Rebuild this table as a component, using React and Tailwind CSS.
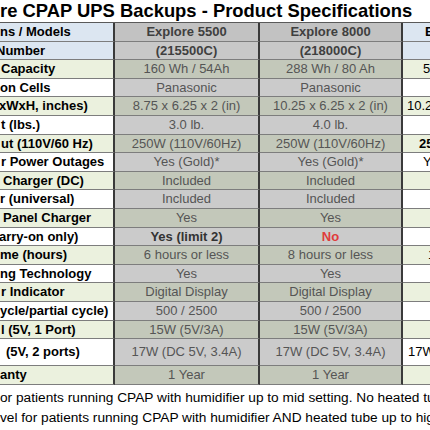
import React from 'react';

const GREEN_GRAY = 'bg-[#c3c8ba]';
const PLAIN_GRAY = 'bg-[#cbcbcb]';

// label: visible part of the spec name, lx: its left offset
// r: the third product column, which runs off the page (text + left offset)
const rows = [
  { label: 'ns / Models', lx: 0, a: 'Explore 5500', b: 'Explore 8000', r: 'Explore 6000', rx: 22, kind: 'head', bold: true },
  { label: 'Number', lx: -4, a: '(215500C)', b: '(218000C)', r: '', rx: 0, kind: 'blue', bold: true },
  { label: 'Capacity', lx: 1, a: '160 Wh / 54Ah', b: '288 Wh / 80 Ah', r: '512 Wh / 40Ah', rx: 20, kind: 'green' },
  { label: 'on Cells', lx: 0, a: 'Panasonic', b: 'Panasonic', r: '', rx: 0, kind: 'white' },
  { label: 'xWxH, inches)', lx: -1, a: '8.75 x 6.25 x 2 (in)', b: '10.25 x 6.25 x 2 (in)', r: '10.25 x 6.25 x 2 (in)', rx: 4, kind: 'green' },
  { label: 't (lbs.)', lx: 1, a: '3.0 lb.', b: '4.0 lb.', r: '', rx: 0, kind: 'white' },
  { label: 'ut (110V/60 Hz)', lx: 1, a: '250W (110V/60Hz)', b: '250W (110V/60Hz)', r: '250W (110V)', rx: 16, kind: 'green', rBold: true },
  { label: 'r Power Outages', lx: 1, a: 'Yes (Gold)*', b: 'Yes (Gold)*', r: 'Yes (Gold)*', rx: 20, kind: 'white' },
  { label: 'Charger (DC)', lx: 3, a: 'Included', b: 'Included', r: '', rx: 0, kind: 'green' },
  { label: 'r (universal)', lx: 0, a: 'Included', b: 'Included', r: '', rx: 0, kind: 'white' },
  { label: 'Panel Charger', lx: 3, a: 'Yes', b: 'Yes', r: '', rx: 0, kind: 'green' },
  { label: 'arry-on only)', lx: -1, a: 'Yes (limit 2)', b: 'No', r: '', rx: 0, kind: 'white', aBold: true, bRed: true },
  { label: 'me (hours)', lx: 0, a: '6 hours or less', b: '8 hours or less', r: '10 hours or less', rx: 25, kind: 'green' },
  { label: 'ng Technology', lx: 0, a: 'Yes', b: 'Yes', r: '', rx: 0, kind: 'white' },
  { label: 'r Indicator', lx: 1, a: 'Digital Display', b: 'Digital Display', r: '', rx: 0, kind: 'green' },
  { label: 'ycle/partial cycle)', lx: 0, a: '500 / 2500', b: '500 / 2500', r: '', rx: 0, kind: 'white' },
  { label: 'l (5V, 1 Port)', lx: 1, a: '15W (5V/3A)', b: '15W (5V/3A)', r: '', rx: 0, kind: 'green' },
  { label: '(5V, 2 ports)', lx: 6, a: '17W (DC 5V, 3.4A)', b: '17W (DC 5V, 3.4A)', r: '17W (DC 5V, 3.4A)', rx: 5, kind: 'white', tall: true },
  { label: 'anty', lx: 0, a: '1 Year', b: '1 Year', r: '', rx: 0, kind: 'green' },
];

const labelBg = {
  head: 'bg-[#dce6f1]',
  blue: 'bg-[#dce6f1]',
  green: 'bg-[#ebf1de]',
  white: 'bg-white',
};

const grayBg = {
  head: 'bg-[#c2c2c2]',
  blue: 'bg-[#c8c8c8]',
  green: GREEN_GRAY,
  white: PLAIN_GRAY,
};

const SpecRow = ({ row }) => {
  const h = row.tall ? 'h-[27px]' : 'h-[18.6px]';
  const cell = `${h} flex items-center border-b border-[#7d7d7d] overflow-hidden whitespace-nowrap`;
  const grayText = row.bold ? 'font-bold text-[#3f3f3f]' : 'text-[#555555]';

  return (
    <>
      <div className={`${cell} ${labelBg[row.kind]} border-r-2 border-r-[#3a3a3a] font-bold text-black`}>
        <span style={{ marginLeft: row.lx }}>{row.label}</span>
      </div>
      <div className={`${cell} ${grayBg[row.kind]} border-r-2 border-r-[#3a3a3a] justify-center ${grayText}`}>
        <span className={row.aBold ? 'font-bold text-[#333333]' : ''}>{row.a}</span>
      </div>
      <div className={`${cell} ${grayBg[row.kind]} border-r-2 border-r-[#3a3a3a] justify-center ${grayText}`}>
        <span className={row.bRed ? 'font-bold text-[#e03c3c]' : ''}>{row.b}</span>
      </div>
      <div className={`${cell} ${labelBg[row.kind]} text-black ${row.bold || row.rBold ? 'font-bold' : ''}`}>
        <span style={{ marginLeft: row.rx }}>{row.r}</span>
      </div>
    </>
  );
};

export default function App() {
  return (
    <div className="w-[430px] h-[430px] overflow-hidden bg-white font-['Liberation_Sans',Arial,sans-serif]">
      <div className="h-[22px] leading-[22px] text-[18.4px] font-bold text-black whitespace-nowrap">
        re CPAP UPS Backups - Product Specifications
      </div>

      <div className="grid grid-cols-[115px_145px_143px_140px] w-[543px] border-t border-[#5a5a5a] text-[13px]">
        {rows.map((row, i) => (
          <SpecRow key={i} row={row} />
        ))}
      </div>

      <div className="pt-[3px] text-[13.7px] leading-[20px] text-black whitespace-nowrap">
        <p>or patients running CPAP with humidifier up to mid setting. No heated tube.</p>
        <p>vel for patients running CPAP with humidifier AND heated tube up to high setting.</p>
      </div>
    </div>
  );
}
